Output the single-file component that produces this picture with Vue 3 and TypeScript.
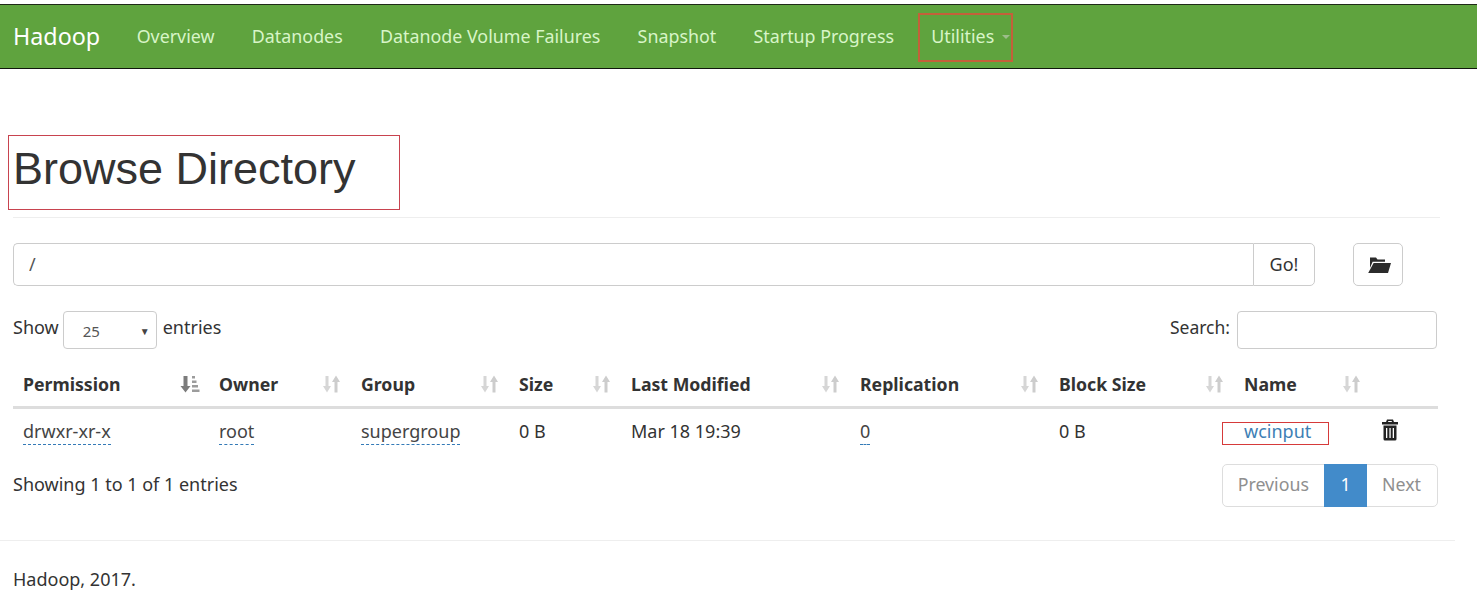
<script setup lang="ts">
const links = ['Overview', 'Datanodes', 'Datanode Volume Failures', 'Snapshot', 'Startup Progress']
const columns = [
  { label: 'Permission', sorted: true },
  { label: 'Owner', sorted: false },
  { label: 'Group', sorted: false },
  { label: 'Size', sorted: false },
  { label: 'Last Modified', sorted: false },
  { label: 'Replication', sorted: false },
  { label: 'Block Size', sorted: false },
  { label: 'Name', sorted: false }
]
</script>

<template>
  <div class="page">
    <nav class="navbar">
      <span class="brand">Hadoop</span>
      <a v-for="l in links" :key="l" class="nav-link">{{ l }}</a>
      <a class="nav-link util">Utilities<i class="caret"></i><span class="mark mark-util"></span></a>
    </nav>

    <main class="content">
      <header class="page-header">
        <h1>Browse Directory<span class="mark mark-title"></span></h1>
      </header>

      <div class="path-row">
        <div class="path-group">
          <input class="path-input" value="/" />
          <button class="go">Go!</button>
        </div>
        <button class="folder" aria-label="Create directory">
          <svg width="24" height="20" viewBox="0 0 24 20">
            <path fill="#2b2b2b" d="M3 2.5h6l1.5 2H18v2.2H5.6L3 13z" />
            <path fill="#2b2b2b" d="M6.6 8H24l-3 10H1.2z" />
          </svg>
        </button>
      </div>

      <div class="controls">
        <label class="length">
          Show
          <span class="select"><span>25</span><i class="select-arrow">▼</i></span>
          entries
        </label>
        <label class="search">Search:<input class="search-input" /></label>
      </div>

      <table class="grid">
        <colgroup>
          <col class="c1" /><col class="c2" /><col class="c3" /><col class="c4" />
          <col class="c5" /><col class="c6" /><col class="c7" /><col class="c8" /><col class="c9" />
        </colgroup>
        <thead>
          <tr>
            <th v-for="c in columns" :key="c.label">
              <span class="th-inner">
                {{ c.label }}
                <svg v-if="c.sorted" class="sort" width="20" height="18" viewBox="0 0 20 18">
                  <path fill="#7c7c7c" d="M3.500 1h4v10h3l-5 6.500-5-6.500h3z" />
                  <path fill="#9c9c9c" d="M12 1h3v2.500h-3zM12 5.500h4.500V8H12zM12 10h6v2.500h-6zM12 14.500h7.500V17H12z" />
                </svg>
                <svg v-else class="sort" width="20" height="18" viewBox="0 0 20 18">
                  <path fill="#d6d6d6" d="M3.500 1h3v10H9l-4 6.500L1 11h2.500z" />
                  <path fill="#cdcdcd" d="M12.500 17.500h3V7H18l-4-6.500L10 7h2.500z" />
                </svg>
              </span>
            </th>
            <th></th>
          </tr>
        </thead>
        <tbody>
          <tr>
            <td><a class="dotted">drwxr-xr-x</a></td>
            <td><a class="dotted">root</a></td>
            <td><a class="dotted">supergroup</a></td>
            <td>0 B</td>
            <td>Mar 18 19:39</td>
            <td><a class="dotted">0</a></td>
            <td>0 B</td>
            <td class="name-cell"><a class="file">wcinput</a><span class="mark mark-file"></span></td>
            <td>
              <svg class="trash" width="18" height="22" viewBox="0 0 18 22">
                <path fill="#222" d="M6 0.500h6l1 2.500h4v2.500H1V3h4zM7 3h4l-.4-1H7.400z" fill-rule="evenodd" />
                <path fill="#222" fill-rule="evenodd" d="M2.500 6.500h13V20a1.500 1.500 0 0 1-1.500 1.500H4A1.500 1.500 0 0 1 2.500 20zM5 9v10h1.300V9zM8.400 9v10h1.300V9zM11.700 9v10H13V9z" />
              </svg>
            </td>
          </tr>
        </tbody>
      </table>

      <div class="bottom">
        <span class="info">Showing 1 to 1 of 1 entries</span>
        <div class="pager">
          <span class="pg">Previous</span>
          <span class="pg active">1</span>
          <span class="pg next">Next</span>
        </div>
      </div>
    </main>

    <footer class="footer">Hadoop, 2017.</footer>
  </div>
</template>

<style>
html, body { margin: 0; background: #fff; }
</style>

<style scoped>
.page {
  width: 1477px;
  height: 601px;
  overflow: hidden;
  padding-top: 4px;
  box-sizing: border-box;
  font-family: "Noto Sans", "Open Sans", sans-serif;
  font-size: 18px;
  line-height: 26px;
  color: #333;
  background: #fff;
}
.navbar {
  height: 65px;
  box-sizing: border-box;
  background: #5fa33e;
  border-top: 1px solid #1f2a18;
  border-bottom: 1px solid #10180c;
  display: flex;
  align-items: center;
  padding: 0 0 2px 13px;
}
.brand { font-size: 23.300px; color: #fff; margin-right: 36.500px; }
.nav-link { font-size: 17.850px; color: #d8f5c8; margin-right: 37.300px; position: relative; display: inline-flex; align-items: center; }
.caret {
  width: 0; height: 0; margin-left: 8px; margin-top: 3px;
  border-left: 4px solid transparent; border-right: 4px solid transparent;
  border-top: 4px solid #9dbd8b;
}
.mark { position: absolute; border: 1px solid #d63a3a; pointer-events: none; box-sizing: border-box; }
.mark-util { left: -13px; top: -10px; width: 95px; height: 49px; border: 2px solid #c4603a; }
.content { padding: 0 39px 0 13px; }
.page-header {
  margin-top: 66px;
  height: 82px;
  border-bottom: 1px solid #eee;
  margin-right: -2px;
}
h1 {
  margin: 0;
  position: relative;
  font-family: "Liberation Sans", Arial, sans-serif;
  font-weight: 400;
  font-size: 45px;
  line-height: 68px;
  color: #333;
}
.mark-title { left: -5px; top: 0; width: 392px; height: 75px; border-color: #c8434f; }
.path-row { display: flex; margin-top: 25px; height: 43px; }
.path-group { display: flex; width: 1302px; }
.path-input {
  flex: 1; min-width: 0; box-sizing: border-box; height: 43px;
  border: 1px solid #ccc; border-right: 0; border-radius: 5px 0 0 5px;
  padding: 0 15px 2px; font: inherit; color: #555; outline: none;
}
.go {
  width: 62px; height: 43px; box-sizing: border-box; background: #fff;
  border: 1px solid #ccc; border-radius: 0 5px 5px 0; font: inherit; color: #333; padding: 0 0 2px;
}
.folder {
  width: 50px; height: 43px; margin-left: 38px; background: #fff;
  border: 1px solid #ccc; border-radius: 5px; padding: 0 0 0 2px; display: flex; align-items: center; justify-content: center;
}
.controls { display: flex; justify-content: space-between; align-items: center; margin-top: 25px; height: 38px; margin-right: 1px; }
.length, .search { display: flex; align-items: flex-start; line-height: 32px; }
.search { font-size: 17.500px; }
.select {
  width: 94px; height: 38px; box-sizing: border-box; margin: 0 6px 0 4px;
  border: 1px solid #ccc; border-radius: 4px; display: flex; align-items: center; justify-content: space-between;
  padding: 2px 6px 0 19px; font-size: 15px; color: #555; line-height: 20px;
}
.select-arrow { font-style: normal; font-size: 10px; color: #444; }
.search-input { width: 200px; height: 38px; box-sizing: border-box; margin-left: 7px; border: 1px solid #ccc; border-radius: 4px; outline: none; }
.grid { width: 1425px; table-layout: fixed; border-collapse: collapse; margin-top: 15px; }
.c1 { width: 196px; } .c2 { width: 142px; } .c3 { width: 158px; } .c4 { width: 112px; }
.c5 { width: 229px; } .c6 { width: 199px; } .c7 { width: 185px; } .c8 { width: 137px; } .c9 { width: 67px; }
th {
  text-align: left; padding: 0 10px 2px; height: 43px; box-sizing: border-box;
  border-bottom: 3px solid #ddd; font-weight: 700; font-size: 17.700px; color: #333;
}
.th-inner { display: flex; align-items: center; justify-content: space-between; }
.sort { margin-right: -1px; flex: none; }
td { padding: 0 10px; height: 46px; box-sizing: border-box; vertical-align: middle; }
.dotted { color: #444; border-bottom: 1px dashed #337ab7; padding-bottom: 1px; }
.name-cell { position: relative; }
.file { color: #3e7fb5; }
.mark-file { left: -12px; top: 13px; width: 107px; height: 23px; }
.trash { display: block; margin: -1px 0 0 0; }
.bottom { display: flex; justify-content: space-between; margin-top: 11px; }
.info { margin-top: 7px; }
.pager { display: flex; height: 43px; box-sizing: border-box; border: 1px solid #ddd; border-radius: 5px; }
.pg { display: flex; align-items: center; padding: 0 15px 3px; color: #8f8f8f; font-size: 17.800px; }
.pg.active { background: #428bca; color: #fff; margin: -1px 0; padding: 0 0 3px; width: 43px; justify-content: center; }
.pg.next { padding-right: 16px; }
.footer { margin-top: 33px; border-top: 1px solid #eee; width: 1455px; box-sizing: border-box; padding: 25px 0 0 13px; }
</style>
